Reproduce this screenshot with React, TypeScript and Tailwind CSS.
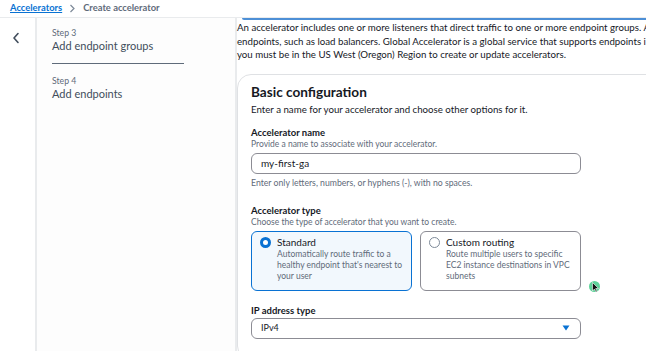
import React from 'react';

function Radio({ checked }: { checked: boolean }) {
  return checked ? (
    <span className="mt-[2px] h-[11px] w-[11px] shrink-0 rounded-full border-[3px] border-[#0972d3] bg-white" />
  ) : (
    <span className="mt-[2px] h-[11px] w-[11px] shrink-0 rounded-full border border-[#7d8998] bg-white" />
  );
}

function TypeCard({
  title,
  desc,
  checked,
}: {
  title: string;
  desc: string;
  checked: boolean;
}) {
  return (
    <div
      className={
        checked
          ? 'flex h-[60px] w-[161px] gap-[6px] rounded-[6px] border border-[#0972d3] bg-[#f2f8fd] pl-[8px] pr-[3px] pt-[3px]'
          : 'flex h-[60px] w-[161px] gap-[6px] rounded-[6px] border border-[#8c8c94] bg-white pl-[8px] pr-[3px] pt-[3px]'
      }
    >
      <Radio checked={checked} />
      <div>
        <div className="text-[10px] leading-[14px] text-[#16191f]">{title}</div>
        <div className="text-[8.5px] leading-[11px] text-[#5f6b7a]">{desc}</div>
      </div>
    </div>
  );
}

export default function App() {
  return (
    <div
      className="h-[351px] w-[646px] overflow-hidden bg-white text-[#16191f]"
      style={{ fontFamily: 'Lato, "Open Sans", sans-serif' }}
    >
      <header className="flex h-[18px] items-center gap-[7px] border-b border-[#e9ebed] pl-[10px] text-[9.4px]">
        <a className="font-bold text-[#0972d3] underline decoration-[#0972d3]">Accelerators</a>
        <svg width="7" height="9" viewBox="0 0 7 9" fill="none">
          <path d="M1.5 1l3.5 3.5L1.5 8" stroke="#7d8998" strokeWidth="1.2" />
        </svg>
        <span className="font-bold text-[#5f6b7a]">Create accelerator</span>
      </header>

      <div className="flex h-[333px]">
        <div className="w-[37px] shrink-0 border-r-2 border-[#e9ebed] pt-[14px]">
          <svg className="ml-[12px]" width="8" height="12" viewBox="0 0 8 12" fill="none">
            <path d="M6 1.5L2 6l4 4.5" stroke="#414d5c" strokeWidth="1.6" strokeLinecap="round" strokeLinejoin="round" />
          </svg>
        </div>

        <aside className="w-[200px] shrink-0 border-r-2 border-[#e9ebed] bg-[#fdfdfd] pl-[15px] pt-[9px]">
          <div className="text-[8.7px] leading-[12px] text-[#5f6b7a]">Step 3</div>
          <div className="text-[11px] leading-[14px] text-[#414d5c]">Add endpoint groups</div>
          <div className="mt-[10px] h-px w-[132px] bg-[#5f6b7a]" />
          <div className="mt-[11px] text-[8.7px] leading-[12px] text-[#5f6b7a]">Step 4</div>
          <div className="text-[11px] leading-[14px] text-[#414d5c]">Add endpoints</div>
        </aside>

        <main className="min-w-0 flex-1">
          <div className="ml-[5px] h-[2px] rounded-bl-full bg-[#4d8fd6]" />
          <p className="mt-[1px] whitespace-nowrap text-[9.7px] leading-[13.5px] text-[#16191f]">
            An accelerator includes one or more listeners that direct traffic to one or more endpoint groups. A
            <br />
            endpoints, such as load balancers. Global Accelerator is a global service that supports endpoints in
            <br />
            you must be in the US West (Oregon) Region to create or update accelerators.
          </p>

          <section className="mt-[12px] w-[430px] rounded-[14px] border border-[#dfe1e4] px-[13px] pt-[7px] pb-[20px]">
            <h2 className="text-[13.6px] font-bold leading-[20px]">Basic configuration</h2>
            <p className="text-[9.7px] leading-[14px]">
              Enter a name for your accelerator and choose other options for it.
            </p>

            <div className="mt-[10px] text-[9.5px] font-bold leading-[13px]">Accelerator name</div>
            <div className="text-[8.5px] leading-[11px] text-[#5f6b7a]">
              Provide a name to associate with your accelerator.
            </div>
            <div className="mt-[3px] flex h-[21px] w-[330px] items-center rounded-[6px] border border-[#8c8c94] px-[9px] text-[10px]">
              my-first-ga
            </div>
            <div className="mt-[3px] text-[8.7px] leading-[11px] text-[#5f6b7a]">
              Enter only letters, numbers, or hyphens (-), with no spaces.
            </div>

            <div className="mt-[16px] text-[9.5px] font-bold leading-[13px]">Accelerator type</div>
            <div className="text-[8.5px] leading-[11px] text-[#5f6b7a]">
              Choose the type of accelerator that you want to create.
            </div>
            <div className="mt-[3px] flex gap-[8px]">
              <TypeCard
                checked
                title="Standard"
                desc="Automatically route traffic to a healthy endpoint that's nearest to your user"
              />
              <TypeCard
                checked={false}
                title="Custom routing"
                desc="Route multiple users to specific EC2 instance destinations in VPC subnets"
              />
              <div className="relative mt-[50px] h-[11px] w-[11px] rounded-full bg-[#5fd39a]">
                <svg className="absolute left-[3px] top-[1px]" width="8" height="11" viewBox="0 0 8 11">
                  <path d="M0.5 0.5v8.5l2-2 1.5 3 1.2-.6-1.5-2.9h2.8z" fill="#111" stroke="#fff" strokeWidth="0.6" />
                </svg>
              </div>
            </div>

            <div className="mt-[12px] text-[9.5px] font-bold leading-[13px]">IP address type</div>
            <div className="mt-[1px] flex h-[21px] w-[330px] items-center justify-between rounded-[6px] border border-[#8c8c94] pl-[9px] pr-[10px] text-[9px]">
              <span>IPv4</span>
              <svg width="8" height="6" viewBox="0 0 8 6">
                <path d="M0.5 0.5h7L4 5.5z" fill="#0972d3" />
              </svg>
            </div>
          </section>
        </main>
      </div>
    </div>
  );
}
